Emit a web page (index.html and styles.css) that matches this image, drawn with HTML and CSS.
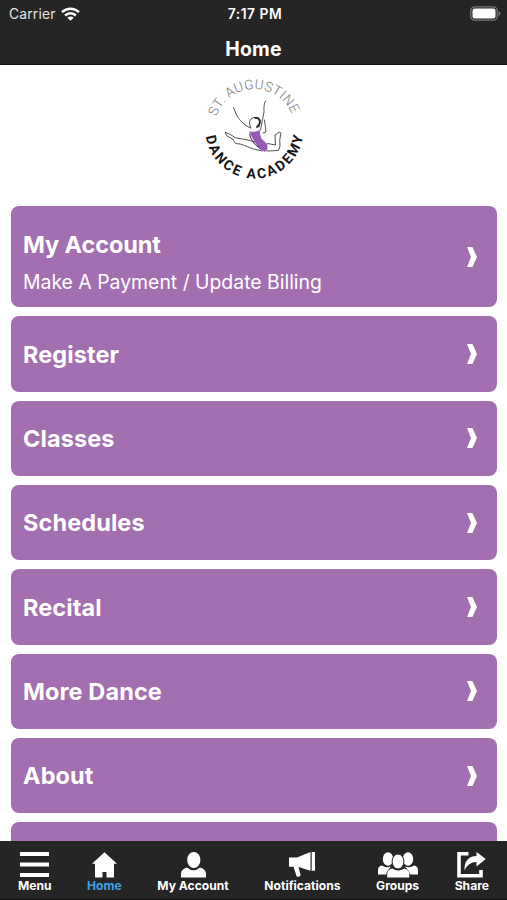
FILE: index.html
```html
<!DOCTYPE html>
<html lang="en">
<head>
<meta charset="utf-8">
<title>Home</title>
<link rel="stylesheet" href="styles.css">
</head>
<body>
<div class="app">
  <header class="top">
    <div class="status">
      <div class="carrier"><span>Carrier</span>
        <svg width="19" height="14" viewBox="0 0 19 14" fill="none" stroke="#fff" stroke-width="2.5"><path d="M1 5.200a12.200 12.200 0 0 1 17 0M4.100 8.500a7.800 7.800 0 0 1 10.800 0"/><path d="M9.500 13.800 6.300 10.800a4.500 4.500 0 0 1 6.400 0z" fill="#fff" stroke="none"/></svg>
      </div>
      <div class="clock">7:17 PM</div>
      <svg class="battery" width="31" height="15" viewBox="0 0 31 15"><rect x=".8" y=".8" width="26.400" height="13.400" rx="4" fill="none" stroke="#777" stroke-width="1.300"/><rect x="2.500" y="2.500" width="23" height="10" rx="2.300" fill="#fff"/><path d="M28.500 5v5q2-1 2-2.500t-2-2.500" fill="#777"/></svg>
    </div>
    <h1>Home</h1>
  </header>
  <main>
    <div class="logo">
      <svg width="120" height="120" viewBox="0 0 120 120">
        <defs>
          <path id="upper" d="M21.500 46.600A40 40 0 0 1 97.500 46.600"/>
          <path id="lower" d="M11 66.500A49 49 0 0 0 108 66.500"/>
        </defs>
        <text class="arc-top"><textPath href="#upper" textLength="97">ST. AUGUSTINE</textPath></text>
        <text class="arc-bottom"><textPath href="#lower" textLength="140">DANCE ACADEMY</textPath></text>
        <g fill="none" stroke="#555" stroke-width="1" stroke-linecap="round" stroke-linejoin="round">
          <path d="M38.500 37.500l3 7.500q6 10 14 13M70.500 31q-2 3-1.500 11l-2.500 13-1 5M69.500 50l1.500 12-3 1"/>
          <path d="M56 58q-3-6 0-9 3-3 6-1l3 4-1 5"/>
          <path d="M60 72q-10-3-16-3.500-4 0-7-3l-7-3.500 2 4 5.500 3 3 4.500q5 0 9 2 8 4 18 5.500M72 81l11.500-.5 1.500-4.500q-1-6 1-13l-2-1-4 3 .5 10-8-1.500"/>
          <path d="M60 48q4-1 5 3 0 4-3 6" stroke="#222" stroke-width="1.700"/>
        </g>
        <path d="M54.500 62q6 1 10-1.500 0 5 1.500 8l6 6v5l-2 2-5-2.500-5-7z" fill="#9857b5" stroke="#9857b5" stroke-width=".8"/>
        <path d="M54.500 64q2 9 10 14" fill="none" stroke="#442850" stroke-width="1"/>
      </svg>
    </div>
    <nav class="cards">
      <a class="card tall"><div><h2>My Account</h2><p>Make A Payment / Update Billing</p></div><svg class="chev" viewBox="0 0 10 20"><path d="M0 0h5.400l4.600 10-4.600 10H0l4-10z"/></svg></a>
      <a class="card"><h2>Register</h2><svg class="chev" viewBox="0 0 10 20"><path d="M0 0h5.400l4.600 10-4.600 10H0l4-10z"/></svg></a>
      <a class="card"><h2>Classes</h2><svg class="chev" viewBox="0 0 10 20"><path d="M0 0h5.400l4.600 10-4.600 10H0l4-10z"/></svg></a>
      <a class="card"><h2>Schedules</h2><svg class="chev" viewBox="0 0 10 20"><path d="M0 0h5.400l4.600 10-4.600 10H0l4-10z"/></svg></a>
      <a class="card"><h2>Recital</h2><svg class="chev" viewBox="0 0 10 20"><path d="M0 0h5.400l4.600 10-4.600 10H0l4-10z"/></svg></a>
      <a class="card"><h2>More Dance</h2><svg class="chev" viewBox="0 0 10 20"><path d="M0 0h5.400l4.600 10-4.600 10H0l4-10z"/></svg></a>
      <a class="card"><h2>About</h2><svg class="chev" viewBox="0 0 10 20"><path d="M0 0h5.400l4.600 10-4.600 10H0l4-10z"/></svg></a>
      <a class="card"></a>
    </nav>
  </main>
  <footer class="tabs">
    <a class="tab"><svg width="29" height="26" viewBox="0 0 29 26"><path d="M0 0h29v4H0zM0 10.500h29v4H0zM0 21h29v4H0z"/></svg><span>Menu</span></a>
    <a class="tab active"><svg width="25" height="26" viewBox="0 0 25 26"><path d="M12.500.3 25 11.800H22V25.500H14.500V20h-4v5.500H3V11.800H0z"/></svg><span>Home</span></a>
    <a class="tab"><svg width="25" height="26" viewBox="0 0 25 26"><ellipse cx="12.800" cy="8" rx="6.600" ry="8"/><path d="M0 25.500v-3.500q0-5 6-6.500 6.500 5.500 13 0 6 1.500 6 6.500v3.500z"/></svg><span>My Account</span></a>
    <a class="tab"><svg width="26" height="26" viewBox="0 0 26 26"><path d="M0 5.500h8L21.500 0v18.800L9.500 15l2.200 8.500q-2 2-4 1L4.500 14.800H0zM22.700 0H26v18.800h-3.300z"/></svg><span>Notifications</span></a>
    <a class="tab"><svg width="40" height="26" viewBox="0 0 40 26"><ellipse cx="10" cy="7" rx="5.200" ry="6.800"/><ellipse cx="30" cy="7" rx="5.200" ry="6.800"/><path d="M0 22.500V18q0-4 4-4.500 4 3 9 1-4 4-5 8zM40 22.500V18q0-4-4-4.500-4 3-9 1 4 4 5 8z"/><path d="M9.200 25.500v-3.500q0-4.500 5-5.600 6 4 12 0 5 1 5 5.600v3.500z"/><ellipse cx="20" cy="9.500" rx="5.900" ry="7.500" stroke="#252525"/></svg><span>Groups</span></a>
    <a class="tab"><svg width="29" height="26" viewBox="0 0 29 26"><path d="M11.500 1.800H2v21.900h22V18" fill="none" stroke="#fff" stroke-width="3.600"/><path d="M7.500 18.500Q7 4.500 19.500 4V0L28.800 7l-9.300 7.500V10Q11 10 7.500 18.500"/></svg><span>Share</span></a>
  </footer>
</div>
</body>
</html>
```
FILE: styles.css
```css
* { box-sizing: border-box; margin: 0; padding: 0; }
body { font-family: Inter, "Liberation Sans", sans-serif; background: #fff; color: #fff; }
.app { height: 900px; display: flex; flex-direction: column; overflow: hidden; }
.top { height: 64.500px; flex: none; background: #252525; border-bottom: 1.500px solid #111; }
.status { height: 27px; display: grid; grid-template-columns: 1fr auto 1fr; align-items: center; padding: 0 6px 0 9px; font-size: 13.800px; }
.carrier { display: flex; align-items: center; gap: 5px; color: #e4e4e4; letter-spacing: .2px; }
.clock { font-weight: 600; font-size: 13.800px; letter-spacing: .5px; }
.battery { justify-self: end; }
h1 { font-size: 19.400px; line-height: 24px; padding-top: 10px; text-align: center; font-weight: 700; letter-spacing: .2px; }
main { flex: 1; min-height: 0; overflow: hidden; }
.logo { height: 141.800px; padding: 5.500px 0 0 2px; display: flex; justify-content: center; }
.arc-top { font: 300 13.500px Roboto, sans-serif; fill: #777; }
.arc-bottom { font: 700 14px Roboto, sans-serif; fill: #151515; }
.cards { display: flex; flex-direction: column; gap: 9px; padding: 0 10.500px 0 11px; }
.card { height: 75.300px; flex: none; border-radius: 8px; background: #a36fb0; padding: 0 20px 0 12px; display: flex; align-items: center; justify-content: space-between; }
.card h2 { padding-top: 1px; }
.tall { height: 101.200px; }
.tall div { padding-top: 11px; }
h2 { font-size: 23.500px; line-height: 30px; font-weight: 700; letter-spacing: .1px; }
.tall h2 { letter-spacing: -.1px; }
.card p { font-size: 19.400px; line-height: 26px; margin-top: 9px; }
.chev { width: 10px; height: 20px; fill: #fff; }
.tabs { height: 59px; flex: none; background: #252525; border-bottom: 1px solid #111; display: flex; justify-content: space-between; padding: 11px 18px 0 18px; }
.tab { display: flex; flex-direction: column; align-items: center; font-size: 12.100px; font-weight: 700; line-height: 16px; }
.tab svg { fill: #fff; }
.active span { color: #3ca1e2; }
```
